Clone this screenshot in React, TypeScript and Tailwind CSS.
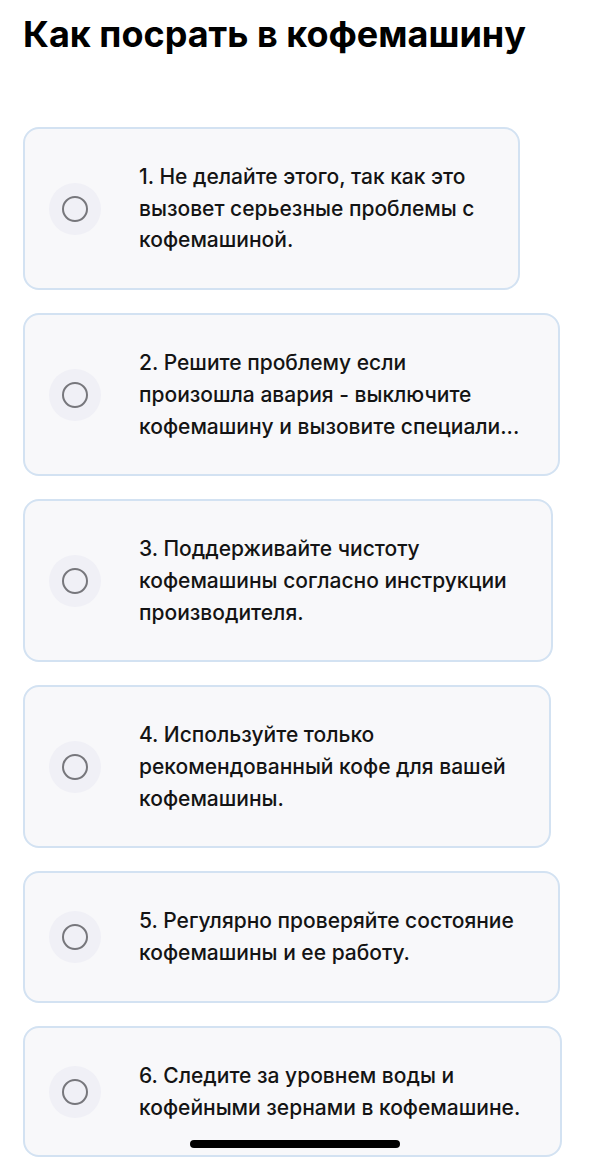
const tips: { lines: string[]; width: string }[] = [
  {
    lines: ["1. Не делайте этого, так как это", "вызовет серьезные проблемы с", "кофемашиной."],
    width: "w-[497px]",
  },
  {
    lines: ["2. Решите проблему если", "произошла авария - выключите", "кофемашину и вызовите специали..."],
    width: "w-[537px]",
  },
  {
    lines: ["3. Поддерживайте чистоту", "кофемашины согласно инструкции", "производителя."],
    width: "w-[530px]",
  },
  {
    lines: ["4. Используйте только", "рекомендованный кофе для вашей", "кофемашины."],
    width: "w-[528px]",
  },
  {
    lines: ["5. Регулярно проверяйте состояние", "кофемашины и ее работу."],
    width: "w-[537px]",
  },
  {
    lines: ["6. Следите за уровнем воды и", "кофейными зернами в кофемашине."],
    width: "w-[539px]",
  },
];

function Radio() {
  return (
    <div className="flex h-[52px] w-[52px] shrink-0 items-center justify-center rounded-full bg-[#f0f0f6]">
      <div className="h-[26px] w-[26px] rounded-full border-2 border-[#77777c]" />
    </div>
  );
}

export default function App() {
  return (
    <div
      className="relative h-[1161px] overflow-hidden bg-white"
      style={{ fontFamily: "Inter, 'Noto Sans', sans-serif" }}
    >
      <h1 className="pl-[23px] pt-[10px] text-[36px] font-bold leading-[48px] text-black">
        Как посрать в кофемашину
      </h1>

      <div className="mt-[69px] flex flex-col gap-[23px] pl-[23px]">
        {tips.map((tip, i) => (
          <div
            key={i}
            className={`${tip.width} flex items-center rounded-[16px] border-2 border-[#d3e2f2] bg-[#f8f8fa] py-[32px] pl-[24px]`}
          >
            <Radio />
            <div className="ml-[38px] whitespace-nowrap text-[21px] font-medium leading-[31.7px] text-[#141414]">
              {tip.lines.map((line, j) => (
                <div key={j}>{line}</div>
              ))}
            </div>
          </div>
        ))}
      </div>

      {/* home indicator */}
      <div className="absolute bottom-[13px] left-[190px] h-[8px] w-[210px] rounded-full bg-black" />
    </div>
  );
}
